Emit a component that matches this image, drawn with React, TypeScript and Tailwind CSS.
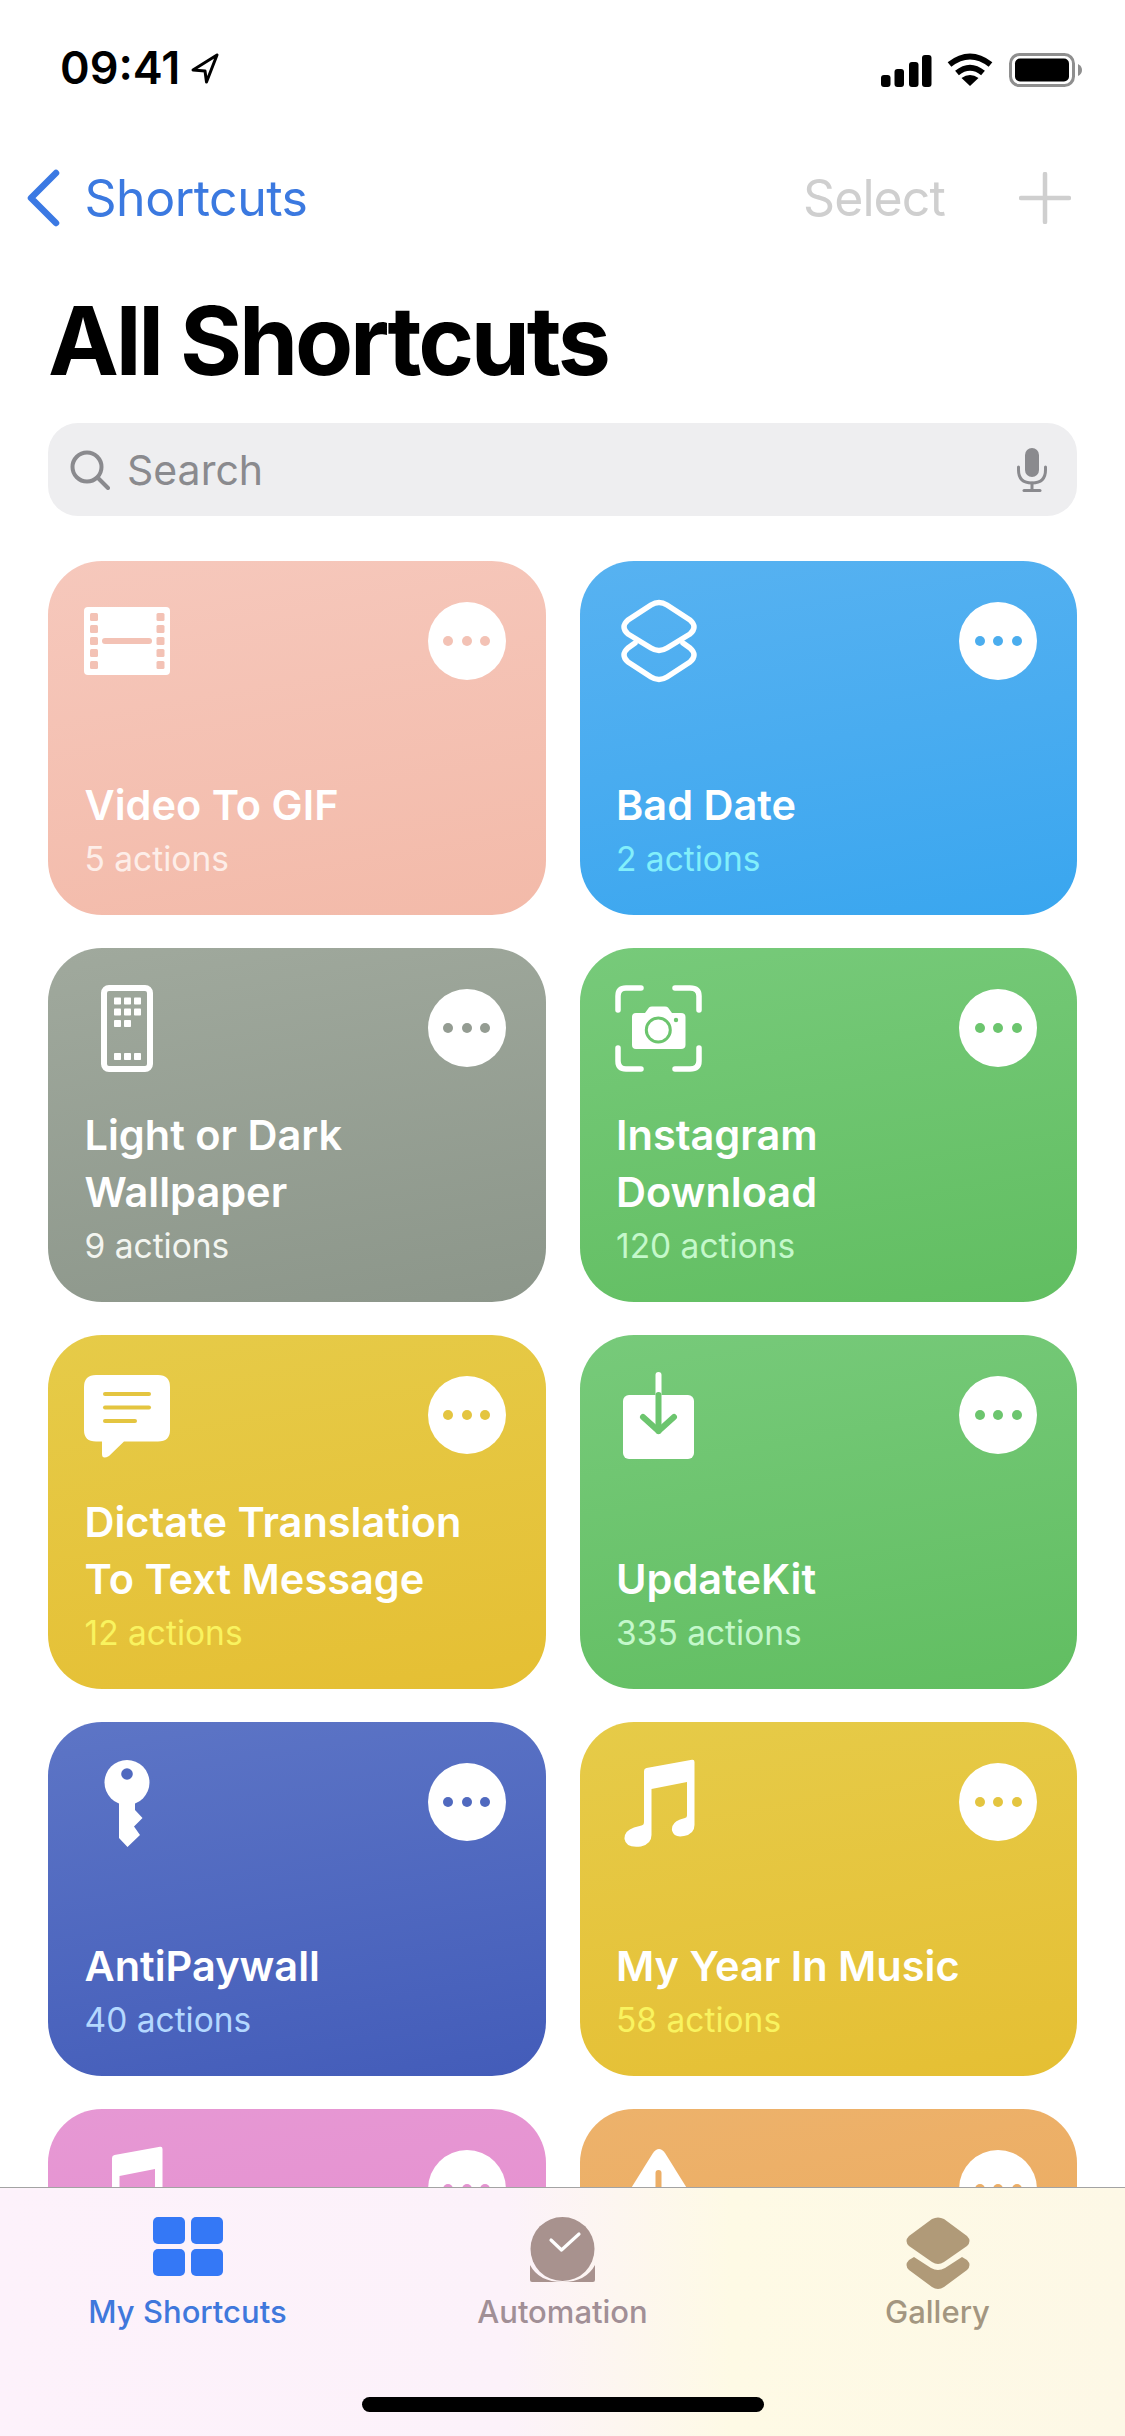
import React from "react";

type IconProps = { c: string };

const VideoIcon = ({ c }: IconProps) => (
  <svg viewBox="0 0 90 90" className="w-[90px] h-[90px]">
    <rect x="2" y="11" width="86" height="68" rx="4" fill="#fff" />
    {[17, 29, 41, 53, 65].map((y) => (
      <g key={y} fill={c}>
        <rect x="8" y={y} width="8" height="8" rx="1.5" />
        <rect x="74.5" y={y} width="8" height="8" rx="1.5" />
      </g>
    ))}
    <rect x="20" y="42" width="50" height="6" rx="3" fill={c} />
  </svg>
);

const LayersIcon = () => (
  <svg viewBox="0 0 90 90" className="w-[90px] h-[90px]" fill="none" stroke="#fff" strokeWidth="5.5" strokeLinejoin="round" strokeLinecap="round">
    <path d="M37 9 Q45 4 53 9 L76 24 Q84 31 76 38 L53 52 Q45 57 37 52 L14 38 Q6 31 14 24 Z" />
    <path d="M21 47 L14 52 Q6 59 14 66 L37 81 Q45 86 53 81 L76 66 Q84 59 76 52 L69 47" />
  </svg>
);

const PhoneIcon = () => (
  <svg viewBox="0 0 90 90" className="w-[90px] h-[90px]">
    <rect x="22" y="5" width="46" height="81" rx="5" fill="none" stroke="#fff" strokeWidth="6" />
    {[
      [32, 14.5], [42, 14.5], [52, 14.5],
      [32, 25.5], [42, 25.5], [52, 25.5],
      [32, 37], [42, 37],
      [32, 70], [42, 70], [52, 70],
    ].map(([x, y]) => (
      <rect key={`${x}-${y}`} x={x} y={y} width="7" height="7" rx="0.8" fill="#fff" />
    ))}
  </svg>
);

const CameraIcon = ({ c }: IconProps) => (
  <svg viewBox="0 0 90 90" className="w-[90px] h-[90px]">
    <g fill="none" stroke="#fff" strokeWidth="5.5" strokeLinecap="round" strokeLinejoin="round">
      <path d="M4 27 V13 Q4 5 12 5 H27" />
      <path d="M61 5 H76 Q85 5 85 13 V27" />
      <path d="M4 65 V78 Q4 86 12 86 H27" />
      <path d="M61 86 H76 Q85 86 85 78 V65" />
    </g>
    <path d="M22 30 H31 L35 24.5 Q36 23.5 38 23.5 H51 Q53 23.5 54 24.5 L58 30 H67 Q71.5 30 71.5 34 V62 Q71.5 66 67 66 H22 Q18 66 18 62 V34 Q18 30 22 30 Z" fill="#fff" />
    <circle cx="44.3" cy="47" r="12" fill="none" stroke={c} strokeWidth="3" />
    <circle cx="62" cy="37" r="2.2" fill={c} />
  </svg>
);

const ChatIcon = ({ c }: IconProps) => (
  <svg viewBox="0 0 90 90" className="w-[90px] h-[90px]">
    <path d="M14 5 H76 Q88 5 88 17 V60 Q88 71.5 76 71.5 H42 L27 86 Q20 90 20 84 V71.5 H14 Q2 71.5 2 60 V17 Q2 5 14 5 Z" fill="#fff" />
    <g stroke={c} strokeWidth="4" strokeLinecap="round">
      <line x1="23" y1="24" x2="67" y2="24" />
      <line x1="23" y1="37.5" x2="67" y2="37.5" />
      <line x1="23" y1="51" x2="53" y2="51" />
    </g>
  </svg>
);

const DownloadIcon = ({ c }: IconProps) => (
  <svg viewBox="0 0 90 90" className="w-[90px] h-[90px]">
    <rect x="9" y="25" width="71" height="64" rx="6" fill="#fff" />
    <line x1="44.5" y1="5" x2="44.5" y2="25" stroke="#fff" strokeWidth="6" strokeLinecap="round" />
    <g fill="none" stroke={c} strokeWidth="6" strokeLinecap="round" strokeLinejoin="round">
      <line x1="44.5" y1="25" x2="44.5" y2="61" />
      <path d="M29 47 L44.5 61 L60 47" />
    </g>
  </svg>
);

const KeyIcon = ({ c }: IconProps) => (
  <svg viewBox="0 0 90 90" className="w-[90px] h-[90px]">
    <circle cx="45" cy="25.5" r="22.5" fill="#fff" />
    <polygon points="37,40 53,40 53,53 60.5,61 52,69.5 58,78 45.5,90 37,81" fill="#fff" />
    <circle cx="45" cy="17" r="5.8" fill={c} />
  </svg>
);

const MusicIcon = () => (
  <svg viewBox="0 0 90 90" className="w-[90px] h-[90px]" fill="#fff">
    <path d="M30 14 Q30 11.5 32.5 11 L78 2.7 Q80.5 2.3 80.5 5 V68 Q80.5 77 70 79 Q60 81 58 73.5 Q57 66 66 62.5 L71 61 Q73 60.5 73 58.5 V25 L37.5 32 V78 Q37.5 87 27 89.5 Q12 91.5 10.5 82 Q10 74 20 70.5 L27.5 68.5 Q30 68 30 65 Z" />
  </svg>
);

const WarningIcon = ({ c }: IconProps) => (
  <svg viewBox="0 0 90 90" className="w-[90px] h-[90px]">
    <path d="M39 9 Q45 1 51 9 L89 70 Q93 80 84 80 H6 Q-3 80 1 70 Z" fill="#fff" />
    <rect x="41.5" y="26" width="6" height="30" rx="3" fill={c} />
  </svg>
);

const cards = [
  { lines: ["Video To GIF"], sub: "5 actions", bg: "from-[#f6c8bc] to-[#f3baa9]", subC: "text-[#fdeee9]", dot: "bg-[#f3c2b5]", c: "#f3c2b5", icon: "video" },
  { lines: ["Bad Date"], sub: "2 actions", bg: "from-[#57b2f1] to-[#39a6ef]", subC: "text-[#82effb]", dot: "bg-[#4badee]", c: "#4badee", icon: "layers" },
  { lines: ["Light or Dark", "Wallpaper"], sub: "9 actions", bg: "from-[#a0a99d] to-[#8c968a]", subC: "text-[#f3f5f0]", dot: "bg-[#949c92]", c: "#949c92", icon: "phone" },
  { lines: ["Instagram", "Download"], sub: "120 actions", bg: "from-[#77ca7a] to-[#61be61]", subC: "text-[#c4f8cb]", dot: "bg-[#6cc56e]", c: "#6cc56e", icon: "camera" },
  { lines: ["Dictate Translation", "To Text Message"], sub: "12 actions", bg: "from-[#e6cb48] to-[#e5bf33]", subC: "text-[#f9f35f]", dot: "bg-[#e4c540]", c: "#e4c540", icon: "chat" },
  { lines: ["UpdateKit"], sub: "335 actions", bg: "from-[#77ca7a] to-[#61be61]", subC: "text-[#c4f8cb]", dot: "bg-[#6cc56e]", c: "#6cc56e", icon: "download" },
  { lines: ["AntiPaywall"], sub: "40 actions", bg: "from-[#5d75c6] to-[#435cb9]", subC: "text-[#b4d8ff]", dot: "bg-[#5069bf]", c: "#5069bf", icon: "key" },
  { lines: ["My Year In Music"], sub: "58 actions", bg: "from-[#e6cb48] to-[#e5bf33]", subC: "text-[#f9f35f]", dot: "bg-[#e4c540]", c: "#e4c540", icon: "music" },
  { lines: [], sub: "", bg: "from-[#e698d4] to-[#e68bcc]", subC: "text-white", dot: "bg-[#e493d0]", c: "#e493d0", icon: "music" },
  { lines: [], sub: "", bg: "from-[#edb26b] to-[#eba85c]", subC: "text-white", dot: "bg-[#ecae66]", c: "#ecae66", icon: "warning" },
];

const CardIcon = ({ name, c }: { name: string; c: string }) => {
  switch (name) {
    case "video": return <VideoIcon c={c} />;
    case "layers": return <LayersIcon />;
    case "phone": return <PhoneIcon />;
    case "camera": return <CameraIcon c={c} />;
    case "chat": return <ChatIcon c={c} />;
    case "download": return <DownloadIcon c={c} />;
    case "key": return <KeyIcon c={c} />;
    case "music": return <MusicIcon />;
    default: return <WarningIcon c={c} />;
  }
};

const Card = ({ card }: { card: (typeof cards)[number] }) => (
  <div className={`h-[354px] rounded-[54px] bg-linear-170 ${card.bg} pl-[36.5px] pr-[40px] pt-[41px] pb-[36px] flex flex-col text-white`}>
    <div className="h-[78px] flex items-center justify-between">
      <div className="-ml-[2.5px] w-[90px] h-[90px] shrink-0">
        <CardIcon name={card.icon} c={card.c} />
      </div>
      <div className="w-[78px] h-[78px] rounded-full bg-white flex items-center justify-center gap-[8.5px]">
        <span className={`w-[10px] h-[10px] rounded-full ${card.dot}`} />
        <span className={`w-[10px] h-[10px] rounded-full ${card.dot}`} />
        <span className={`w-[10px] h-[10px] rounded-full ${card.dot}`} />
      </div>
    </div>
    <div className="mt-auto">
      {card.lines.map((l) => (
        <div key={l} className="text-[41.5px] leading-[57px] font-semibold">{l}</div>
      ))}
      {card.sub && <div className={`mt-[5.5px] text-[33.5px] leading-[40px] font-normal ${card.subC}`}>{card.sub}</div>}
    </div>
  </div>
);

export default function App() {
  return (
    <div className="relative w-[1125px] h-[2436px] overflow-hidden bg-white font-['Inter',sans-serif]">
      {/* status bar */}
      <div className="h-[136px] pl-[60px] pr-[43px] pt-[42px] flex justify-between items-start">
        <div className="flex items-center gap-[10px] h-[52px]">
          <span className="text-[45px] leading-[52px] font-semibold text-black">09:41</span>
          <svg viewBox="0 0 30 32" className="w-[30px] h-[32px]" fill="none" stroke="#000" strokeWidth="3" strokeLinejoin="round">
            <path d="M27 3 L3 18 L15 19 L16.5 30 Z" />
          </svg>
        </div>
        <div className="flex items-end gap-[15px] h-[36px] mt-[9px]">
          <svg viewBox="0 0 51 32" className="w-[51px] h-[32px]" fill="#000">
            <rect x="0" y="20" width="9.5" height="12" rx="3" />
            <rect x="13.5" y="14" width="9.5" height="18" rx="3" />
            <rect x="28" y="7" width="9.5" height="25" rx="3" />
            <rect x="41" y="0" width="9.5" height="32" rx="3" />
          </svg>
          <svg viewBox="0 0 46 34" className="w-[46px] h-[34px]" fill="none" stroke="#000" strokeWidth="6">
            <path d="M2.5 11.5 Q23 -4.5 43.5 11.5" />
            <path d="M10 20 Q23 9.5 36 20" />
            <path d="M23 33 L14.5 25 Q23 19 31.5 25 Z" fill="#000" stroke="none" />
          </svg>
          <svg viewBox="0 0 73 34" className="w-[73px] h-[34px] ml-[1px]">
            <rect x="1.5" y="1.5" width="63" height="31" rx="9" fill="none" stroke="#8f8f8f" strokeWidth="3" />
            <rect x="6" y="5.5" width="54" height="23" rx="5" fill="#000" />
            <path d="M69 11 Q73 13 73 17 Q73 21 69 23 Z" fill="#8f8f8f" />
          </svg>
        </div>
      </div>

      {/* nav bar */}
      <div className="h-[124px] pl-[27px] pr-[54px] flex items-center justify-between">
        <div className="flex items-center gap-[23.5px]">
          <svg viewBox="0 0 34 58" className="w-[34px] h-[58px]" fill="none" stroke="#3b79e3" strokeWidth="6.5" strokeLinecap="round" strokeLinejoin="round">
            <path d="M29 4 L4 29 L29 54" />
          </svg>
          <span className="text-[50px] leading-[60px] text-[#3b79e0] tracking-[-0.5px]">Shortcuts</span>
        </div>
        <div className="flex items-center gap-[74px]">
          <span className="text-[50px] leading-[60px] text-[#cfcfcf] tracking-[-0.9px]">Select</span>
          <svg viewBox="0 0 52 52" className="w-[52px] h-[52px]" stroke="#cfcfcf" strokeWidth="4.5" strokeLinecap="round">
            <line x1="26" y1="2" x2="26" y2="50" />
            <line x1="2" y1="26" x2="50" y2="26" />
          </svg>
        </div>
      </div>

      {/* title */}
      <h1 className="h-[163px] pl-[48px] pt-[26px] text-[95px] leading-[110px] font-bold text-black tracking-[-3.2px]">All Shortcuts</h1>

      {/* search */}
      <div className="mx-[48px] h-[93px] rounded-[30px] bg-[#eeeef0] pl-[22px] pr-[30px] flex items-center justify-between">
        <div className="flex items-center gap-[17px]">
          <svg viewBox="0 0 40 40" className="w-[40px] h-[40px]" fill="none" stroke="#8a8a8e" strokeWidth="4" strokeLinecap="round">
            <circle cx="17" cy="17" r="14.5" />
            <line x1="28" y1="28" x2="38" y2="38" />
          </svg>
          <span className="text-[41px] leading-[50px] text-[#8a8a8e]">Search</span>
        </div>
        <svg viewBox="0 0 30 44" className="w-[30px] h-[44px]" fill="none" stroke="#8a8a8e" strokeWidth="3" strokeLinecap="round">
          <rect x="8" y="0" width="14" height="29" rx="7" fill="#8a8a8e" stroke="none" />
          <path d="M1.5 19 V22 Q1.5 35 15 35 Q28.5 35 28.5 22 V19" />
          <line x1="15" y1="35" x2="15" y2="42" />
          <line x1="7" y1="42.5" x2="23" y2="42.5" />
        </svg>
      </div>

      {/* grid */}
      <div className="mt-[45px] px-[48px] grid grid-cols-2 gap-x-[34px] gap-y-[33px]">
        {cards.map((c, i) => (
          <Card key={i} card={c} />
        ))}
      </div>

      {/* tab bar */}
      <div className="absolute inset-x-0 bottom-0 h-[249px] border-t border-[#a3a3a3] bg-[linear-gradient(90deg,#fdf2fb_0%,#fcf2fa_45%,#fefae5_65%,#fdf8e6_100%)]">
        <div className="grid grid-cols-3 pt-[29px]">
          <div className="flex flex-col items-center">
            <div className="h-[76.5px] flex items-start">
              <div className="w-[70px] grid grid-cols-2 gap-x-[6px] gap-y-[5px]">
                <span className="h-[27px] rounded-[5px] bg-[#3478f6]" />
                <span className="h-[27px] rounded-[5px] bg-[#3478f6]" />
                <span className="h-[27px] rounded-[5px] bg-[#3478f6]" />
                <span className="h-[27px] rounded-[5px] bg-[#3478f6]" />
              </div>
            </div>
            <span className="text-[31px] leading-[36px] font-medium text-[#3f78dc]">My Shortcuts</span>
          </div>
          <div className="flex flex-col items-center">
            <div className="h-[76.5px] flex items-start">
              <svg viewBox="0 0 65 65" className="w-[65px] h-[65px]">
                <path d="M0 48 V63 Q0 65 2 65 H63 Q65 65 65 63 V48 Q56 65 32.5 65 Q9 65 0 48 Z" fill="#a8928e" />
                <circle cx="32.5" cy="32" r="32" fill="#a8928e" />
                <path d="M21 23 L31.5 33 L49 17" fill="none" stroke="#fff" strokeWidth="3.2" strokeLinecap="round" strokeLinejoin="round" />
              </svg>
            </div>
            <span className="text-[31px] leading-[36px] font-medium text-[#a18f96]">Automation</span>
          </div>
          <div className="flex flex-col items-center">
            <div className="h-[76.5px] flex items-start">
              <svg viewBox="0 0 64 73" className="w-[64px] h-[73px]" fill="#b09a78">
                <path d="M26 2 Q32 -1 38 2 L61 19 Q66 24 61 29 L38 45 Q32 49 26 45 L3 29 Q-2 24 3 19 Z" />
                <path d="M8 40 L25 51 Q32 55 39 51 L56 40 L61 43 Q66 48 61 53 L38 70 Q32 74 26 70 L3 53 Q-2 48 3 43 Z" />
              </svg>
            </div>
            <span className="text-[31px] leading-[36px] font-medium text-[#a39680]">Gallery</span>
          </div>
        </div>
        <div className="absolute left-[362px] bottom-[24px] w-[402px] h-[15px] rounded-full bg-black" />
      </div>
    </div>
  );
}
